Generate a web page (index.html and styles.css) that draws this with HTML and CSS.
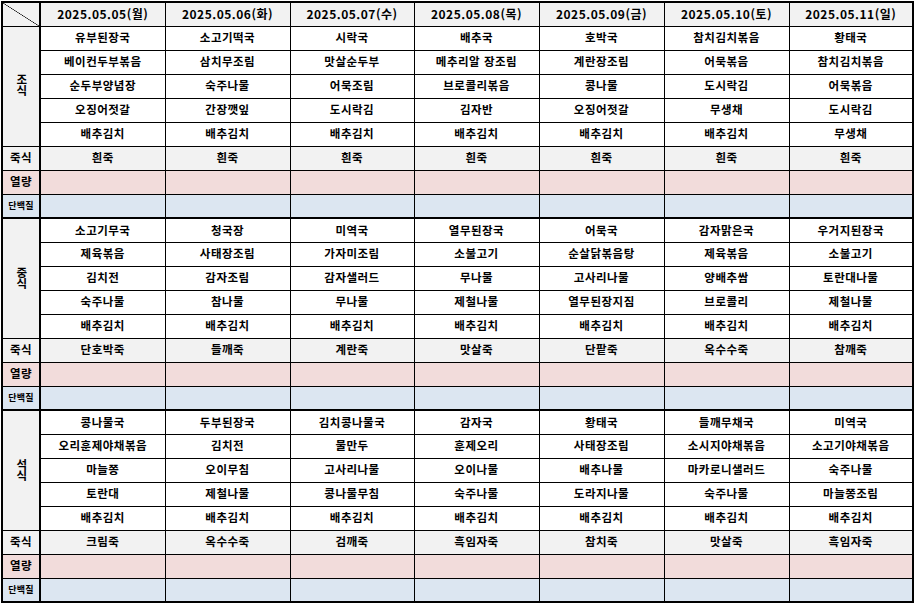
FILE: index.html
```html
<!DOCTYPE html>
<html lang="ko">
<head>
<meta charset="utf-8">
<title>주간 식단표</title>
<link rel="stylesheet" href="styles.css">
</head>
<body>
<div class="wrap">
<table class="menu">
<colgroup>
<col class="c-label"><col class="c-day"><col class="c-day"><col class="c-day2"><col class="c-day"><col class="c-day"><col class="c-day"><col class="c-day2">
</colgroup>
<tr class="head">
<th class="corner"></th>
<th>2025.05.05(월)</th><th>2025.05.06(화)</th><th>2025.05.07(수)</th><th>2025.05.08(목)</th><th>2025.05.09(금)</th><th>2025.05.10(토)</th><th>2025.05.11(일)</th>
</tr>

<tr><th class="meal" rowspan="5"><span class="vt">조식</span></th><td>유부된장국</td><td>소고기떡국</td><td>시락국</td><td>배추국</td><td>호박국</td><td>참치김치볶음</td><td>황태국</td></tr>
<tr><td>베이컨두부볶음</td><td>삼치무조림</td><td>맛살순두부</td><td>메추리알 장조림</td><td>계란장조림</td><td>어묵볶음</td><td>참치김치볶음</td></tr>
<tr><td>순두부양념장</td><td>숙주나물</td><td>어묵조림</td><td>브로콜리볶음</td><td>콩나물</td><td>도시락김</td><td>어묵볶음</td></tr>
<tr><td>오징어젓갈</td><td>간장깻잎</td><td>도시락김</td><td>김자반</td><td>오징어젓갈</td><td>무생채</td><td>도시락김</td></tr>
<tr><td>배추김치</td><td>배추김치</td><td>배추김치</td><td>배추김치</td><td>배추김치</td><td>배추김치</td><td>무생채</td></tr>
<tr class="porridge"><th>죽식</th><td>흰죽</td><td>흰죽</td><td>흰죽</td><td>흰죽</td><td>흰죽</td><td>흰죽</td><td>흰죽</td></tr>
<tr class="kcal"><th>열량</th><td></td><td></td><td></td><td></td><td></td><td></td><td></td></tr>
<tr class="protein sep"><th class="small">단백질</th><td></td><td></td><td></td><td></td><td></td><td></td><td></td></tr>

<tr><th class="meal" rowspan="5"><span class="vt">중식</span></th><td>소고기무국</td><td>청국장</td><td>미역국</td><td>열무된장국</td><td>어묵국</td><td>감자맑은국</td><td>우거지된장국</td></tr>
<tr><td>제육볶음</td><td>사태장조림</td><td>가자미조림</td><td>소불고기</td><td>순살닭볶음탕</td><td>제육볶음</td><td>소불고기</td></tr>
<tr><td>김치전</td><td>감자조림</td><td>감자샐러드</td><td>무나물</td><td>고사리나물</td><td>양배추쌈</td><td>토란대나물</td></tr>
<tr><td>숙주나물</td><td>참나물</td><td>무나물</td><td>제철나물</td><td>열무된장지짐</td><td>브로콜리</td><td>제철나물</td></tr>
<tr><td>배추김치</td><td>배추김치</td><td>배추김치</td><td>배추김치</td><td>배추김치</td><td>배추김치</td><td>배추김치</td></tr>
<tr class="porridge"><th>죽식</th><td>단호박죽</td><td>들깨죽</td><td>계란죽</td><td>맛살죽</td><td>단팥죽</td><td>옥수수죽</td><td>참깨죽</td></tr>
<tr class="kcal"><th>열량</th><td></td><td></td><td></td><td></td><td></td><td></td><td></td></tr>
<tr class="protein sep"><th class="small">단백질</th><td></td><td></td><td></td><td></td><td></td><td></td><td></td></tr>

<tr><th class="meal" rowspan="5"><span class="vt">석식</span></th><td>콩나물국</td><td>두부된장국</td><td>김치콩나물국</td><td>감자국</td><td>황태국</td><td>들깨무채국</td><td>미역국</td></tr>
<tr><td>오리훈제야채볶음</td><td>김치전</td><td>물만두</td><td>훈제오리</td><td>사태장조림</td><td>소시지야채볶음</td><td>소고기야채볶음</td></tr>
<tr><td>마늘쫑</td><td>오이무침</td><td>고사리나물</td><td>오이나물</td><td>배추나물</td><td>마카로니샐러드</td><td>숙주나물</td></tr>
<tr><td>토란대</td><td>제철나물</td><td>콩나물무침</td><td>숙주나물</td><td>도라지나물</td><td>숙주나물</td><td>마늘쫑조림</td></tr>
<tr><td>배추김치</td><td>배추김치</td><td>배추김치</td><td>배추김치</td><td>배추김치</td><td>배추김치</td><td>배추김치</td></tr>
<tr class="porridge"><th>죽식</th><td>크림죽</td><td>옥수수죽</td><td>검깨죽</td><td>흑임자죽</td><td>참치죽</td><td>맛살죽</td><td>흑임자죽</td></tr>
<tr class="kcal"><th>열량</th><td></td><td></td><td></td><td></td><td></td><td></td><td></td></tr>
<tr class="protein sep"><th class="small">단백질</th><td></td><td></td><td></td><td></td><td></td><td></td><td></td></tr>
</table>
</div>
</body>
</html>
```

FILE: styles.css
```css
html, body {
  margin: 0;
  padding: 0;
  background: #ffffff;
}

.wrap {
  padding: 1px 0 0 1px;
}

.menu {
  border-collapse: collapse;
  table-layout: fixed;
  width: 912px;
  border: 2px solid #000;
  font-family: "Noto Sans CJK KR", "Noto Sans", sans-serif;
  font-weight: 700;
  font-size: 11.5px;
  letter-spacing: 0.5px;
  color: #000;
}

.c-label { width: 38px; }
.c-day { width: 125px; }
.c-day2 { width: 124px; }

.menu tr {
  height: 24px;
}

.menu th,
.menu td {
  border: 1px solid #000;
  padding: 0;
  text-align: center;
  vertical-align: middle;
  line-height: 1;
  white-space: nowrap;
  font-weight: 700;
}

.menu td {
  background: #ffffff;
}

.menu th {
  background: #f2f2f2;
  border-right: 2px solid #000;
}

.head th {
  background: #f2f2f2;
  border-right: 1px solid #000;
  font-size: 12px;
}

.head th.corner {
  border-right: 2px solid #000;
  background:
    linear-gradient(to top right, transparent calc(50% - 0.6px), #000 50%, transparent calc(50% + 0.6px)),
    #f2f2f2;
}

.menu th.meal {
  background: #f2f2f2;
  font-size: 11.5px;
}

.vt {
  display: inline-block;
  writing-mode: vertical-rl;
  text-orientation: upright;
  letter-spacing: -0.5px;
  line-height: 1;
}

.porridge td,
.porridge th {
  background: #f2f2f2;
}

.kcal td,
.kcal th {
  background: #f2dcdb;
}

.protein td,
.protein th {
  background: #dce6f1;
}

.menu th.small {
  font-size: 9px;
  letter-spacing: 0.2px;
}

.sep td,
.sep th {
  border-bottom: 2px solid #000;
}
```
